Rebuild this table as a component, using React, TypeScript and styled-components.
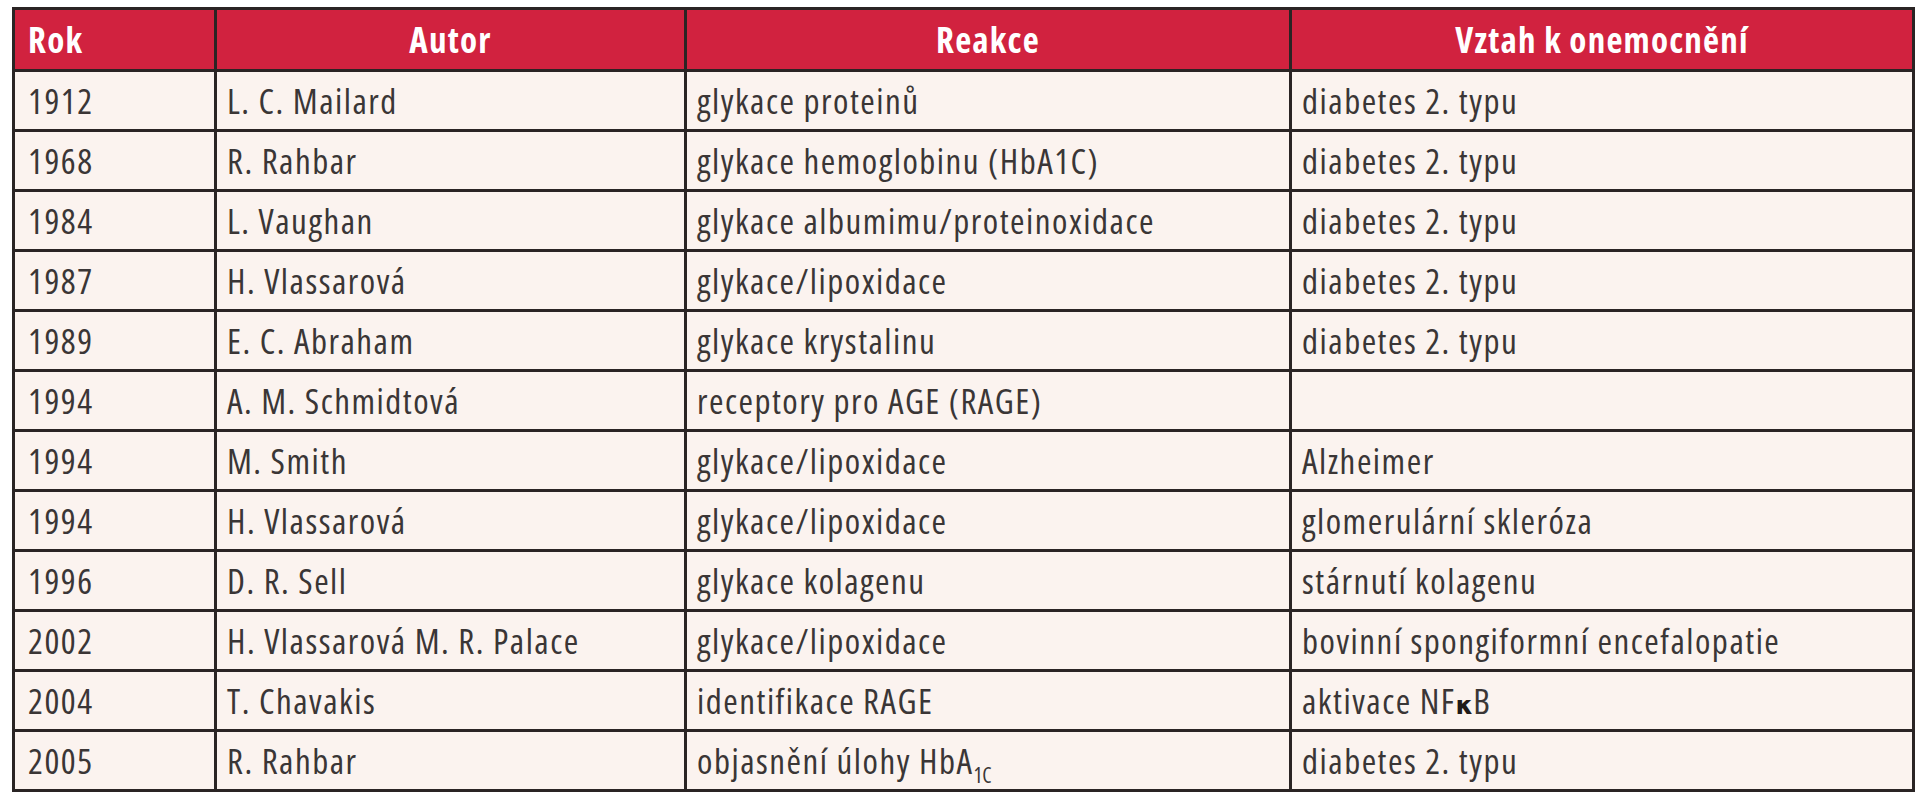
import React from "react"
import styled, { createGlobalStyle } from "styled-components"

const GlobalStyle = createGlobalStyle`
  body {
    margin: 0;
    background: #ffffff;
    font-family: "Open Sans", "Liberation Sans", Arial, sans-serif;
    font-stretch: 75%;
  }
`

const Page = styled.div`
  padding: 7px 0 0 12px;
`
const Table = styled.table`
  width: 1902px;
  table-layout: fixed;
  border-collapse: collapse;
  border: 3px solid #2a2424;
  font-size: 35px;
  font-stretch: 75%;
  letter-spacing: 1.5px;

  thead tr {
    height: 62px;
    background: #d1223f;
  }
`
const HeadCell = styled.th<{ $align?: "left" | "center" }>`
  border: 3px solid #2a2424;
  color: #ffffff;
  font-weight: 700;
  letter-spacing: 1.2px;
  text-align: ${(p) => p.$align || "center"};
  padding: 0 12px 0 ${(p) => (p.$align === "left" ? "13px" : "12px")};
  white-space: nowrap;
`
const BodyRow = styled.tr`
  height: 60px;
  background: #fbf3ef;
`
const Cell = styled.td<{ $first?: boolean }>`
  border: 3px solid #2a2424;
  color: #3a3636;
  font-weight: 430;
  padding: 0 10px 0 ${(p) => (p.$first ? "13px" : "10px")};
  white-space: nowrap;
  vertical-align: middle;
`
const Sub = styled.sub`
  font-size: 21px;
  letter-spacing: 0;
  vertical-align: -9px;
  line-height: 0;
`
const Kappa = styled.span`
  font-family: "DejaVu Sans", sans-serif;
  font-stretch: normal;
  font-weight: bold;
  font-size: 25px;
  color: #1f1a1a;
  letter-spacing: 0;
`

type Row = {
  year: string
  author: string
  reaction: React.ReactNode
  relation: React.ReactNode
}

const rows: Row[] = [
  { year: "1912", author: "L. C. Mailard", reaction: "glykace proteinů", relation: "diabetes 2. typu" },
  { year: "1968", author: "R. Rahbar", reaction: "glykace hemoglobinu (HbA1C)", relation: "diabetes 2. typu" },
  { year: "1984", author: "L. Vaughan", reaction: "glykace albumimu/proteinoxidace", relation: "diabetes 2. typu" },
  { year: "1987", author: "H. Vlassarová", reaction: "glykace/lipoxidace", relation: "diabetes 2. typu" },
  { year: "1989", author: "E. C. Abraham", reaction: "glykace krystalinu", relation: "diabetes 2. typu" },
  { year: "1994", author: "A. M. Schmidtová", reaction: "receptory pro AGE (RAGE)", relation: "" },
  { year: "1994", author: "M. Smith", reaction: "glykace/lipoxidace", relation: "Alzheimer" },
  { year: "1994", author: "H. Vlassarová", reaction: "glykace/lipoxidace", relation: "glomerulární skleróza" },
  { year: "1996", author: "D. R. Sell", reaction: "glykace kolagenu", relation: "stárnutí kolagenu" },
  { year: "2002", author: "H. Vlassarová M. R. Palace", reaction: "glykace/lipoxidace", relation: "bovinní spongiformní encefalopatie" },
  {
    year: "2004",
    author: "T. Chavakis",
    reaction: "identifikace RAGE",
    relation: (
      <>
        aktivace NF<Kappa>κ</Kappa>B
      </>
    ),
  },
  {
    year: "2005",
    author: "R. Rahbar",
    reaction: (
      <>
        objasnění úlohy HbA<Sub>1C</Sub>
      </>
    ),
    relation: "diabetes 2. typu",
  },
]

const App = () => {
  return (
    <>
      <GlobalStyle />
      <Page>
        <Table>
          <colgroup>
            <col style={{ width: 202 }} />
            <col style={{ width: 470 }} />
            <col style={{ width: 605 }} />
            <col style={{ width: 623 }} />
          </colgroup>
          <thead>
            <tr>
              <HeadCell $align="left">Rok</HeadCell>
              <HeadCell>Autor</HeadCell>
              <HeadCell>Reakce</HeadCell>
              <HeadCell>Vztah k onemocnění</HeadCell>
            </tr>
          </thead>
          <tbody>
            {rows.map((row, i) => (
              <BodyRow key={i}>
                <Cell $first>{row.year}</Cell>
                <Cell>{row.author}</Cell>
                <Cell>{row.reaction}</Cell>
                <Cell>{row.relation}</Cell>
              </BodyRow>
            ))}
          </tbody>
        </Table>
      </Page>
    </>
  )
}

export default App
